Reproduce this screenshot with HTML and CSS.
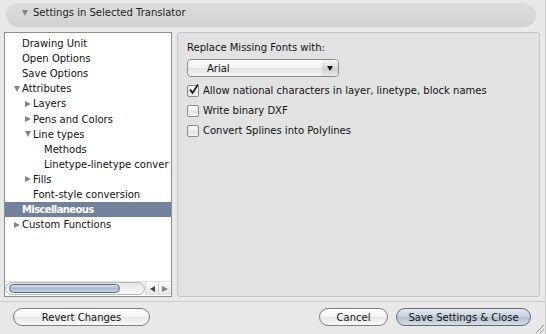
FILE: index.html
```html
<!DOCTYPE html>
<html lang="en">
<head>
    <meta charset="UTF-8">
    <title>Settings in Selected Translator</title>
    <link rel="stylesheet" href="styles.css">
</head>
<body>
    <div class="okno">
        <div class="glava">
            <span class="tri dol"></span>
            <span>Settings in Selected Translator</span>
        </div>

        <div class="vsebina">
            <div class="drevo">
                <div class="seznam">
                    <div class="vrsta n0">Drawing Unit</div>
                    <div class="vrsta n0">Open Options</div>
                    <div class="vrsta n0">Save Options</div>
                    <div class="vrsta n0"><span class="tri dol"></span>Attributes</div>
                    <div class="vrsta n1"><span class="tri desno"></span>Layers</div>
                    <div class="vrsta n1"><span class="tri desno"></span>Pens and Colors</div>
                    <div class="vrsta n1"><span class="tri dol"></span>Line types</div>
                    <div class="vrsta n2">Methods</div>
                    <div class="vrsta n2">Linetype-linetype conver</div>
                    <div class="vrsta n1"><span class="tri desno"></span>Fills</div>
                    <div class="vrsta n1">Font-style conversion</div>
                    <div class="vrsta n0 izbran">Miscellaneous</div>
                    <div class="vrsta n0"><span class="tri desno"></span>Custom Functions</div>
                </div>
                <div class="drsnik">
                    <div class="sled"><div class="rocaj"></div></div>
                    <div class="puscica"><span class="tri levo"></span></div>
                    <div class="puscica"><span class="tri desno"></span></div>
                </div>
            </div>

            <div class="plosca">
                <div class="oznaka">Replace Missing Fonts with:</div>
                <div class="izbira">
                    <span>Arial</span>
                    <span class="izbira-gumb"><span class="tri dol"></span></span>
                </div>
                <label class="polje"><span class="kvadrat oznacen">
                    <svg width="11" height="11" viewBox="0 0 11 11"><path d="M2 5.5 L4.5 9 L10 0.5" fill="none" stroke="#1d1d1d" stroke-width="1.8"/></svg>
                </span>Allow national characters in layer, linetype, block names</label>
                <label class="polje"><span class="kvadrat"></span>Write binary DXF</label>
                <label class="polje"><span class="kvadrat"></span>Convert Splines into Polylines</label>
            </div>
        </div>

        <div class="noga">
            <button class="gumb revert">Revert Changes</button>
            <span class="presledek"></span>
            <button class="gumb cancel">Cancel</button>
            <button class="gumb privzet">Save Settings &amp; Close</button>
        </div>
        <div class="rocka"></div>
    </div>
</body>
</html>
```

FILE: styles.css
```css
* {
    box-sizing: border-box;
}

body {
    margin: 0;
    background-color: #e8e8e8;
    font-family: "DejaVu Sans", "Lucida Grande", sans-serif;
    font-size: 10px;
    color: #111;
}

.okno {
    position: relative;
    width: 546px;
    height: 334px;
    display: flex;
    flex-direction: column;
    border-right: 1px solid #d0d0d0;
}

.glava {
    margin: 3px 9px 0 6px;
    height: 24px;
    border-radius: 12px;
    background: linear-gradient(#dcdcdc, #d2d2d2);
    display: flex;
    align-items: center;
    padding: 0 0 5px 16px;
    gap: 5px;
    color: #222;
}

.tri {
    display: inline-block;
    width: 0;
    height: 0;
}

.tri.dol {
    border-left: 3.5px solid transparent;
    border-right: 3.5px solid transparent;
    border-top: 6px solid #858585;
}

.tri.desno {
    border-top: 3.5px solid transparent;
    border-bottom: 3.5px solid transparent;
    border-left: 6px solid #858585;
}

.tri.levo {
    border-top: 3px solid transparent;
    border-bottom: 3px solid transparent;
    border-right: 5px solid #444;
}

.vsebina {
    display: flex;
    gap: 5px;
    margin: 5px 5px 0 4px;
    height: 265px;
}

.drevo {
    width: 168px;
    background-color: white;
    border: 1px solid #8e8e8e;
    display: flex;
    flex-direction: column;
}

.seznam {
    flex: 1;
    padding-top: 3px;
    overflow: hidden;
}

.vrsta {
    height: 15.1px;
    line-height: 15px;
    white-space: nowrap;
    display: flex;
    align-items: center;
}

.vrsta .tri {
    margin-right: 2px;
}

.n0 {
    padding-left: 17px;
}

.n0 .tri {
    margin-left: -8px;
}

.n1 {
    padding-left: 28px;
}

.n1 .tri {
    margin-left: -8px;
}

.n2 {
    padding-left: 39px;
}

.izbran {
    background-color: #73829c;
    color: white;
    font-weight: bold;
    letter-spacing: -0.6px;
}

.drsnik {
    height: 14px;
    display: flex;
    margin: 0 0 1px 0;
    border-top: 1px solid #e4e4e4;
}

.sled {
    flex: 1;
    border: 1px solid #b8b8b8;
    border-radius: 7px;
    background: linear-gradient(#e4e4e4, #fafafa);
    padding: 1px 24px 1px 3px;
}

.rocaj {
    height: 100%;
    border: 1px solid #536580;
    border-radius: 6px;
    background: linear-gradient(#dbe3ee, #a9b8cc 50%, #c7d3e2);
}

.puscica {
    width: 13px;
    display: flex;
    align-items: center;
    justify-content: center;
    border-left: 1px solid #d4d4d4;
    background: linear-gradient(#fdfdfd, #e4e4e4);
}

.plosca {
    flex: 1;
    background-color: #e2e2e2;
    border: 1px solid #c4c4c4;
    border-radius: 3px;
    padding: 8px 0 0 9px;
}

.oznaka {
    height: 14px;
    line-height: 14px;
    margin-bottom: 4px;
}

.izbira {
    width: 152px;
    height: 18px;
    border: 1px solid #8d8d8d;
    border-radius: 4px;
    background: linear-gradient(#ffffff, #f0f0f0 50%, #e3e3e3 51%, #f4f4f4);
    display: flex;
    align-items: center;
    justify-content: space-between;
    padding-left: 19px;
    margin-bottom: 7px;
}

.izbira-gumb {
    width: 16px;
    height: 100%;
    display: flex;
    align-items: center;
    justify-content: center;
    border-radius: 0 3px 3px 0;
    background: linear-gradient(#f6f6f6, #dadada 50%, #cfcfcf 51%, #e8e8e8);
}

.izbira-gumb .tri.dol {
    border-top-color: #111;
    border-left-width: 3px;
    border-right-width: 3px;
    border-top-width: 5px;
}

.polje {
    display: flex;
    align-items: center;
    gap: 4px;
    height: 13px;
    margin-bottom: 7px;
}

.kvadrat {
    width: 12px;
    height: 12px;
    border: 1px solid #8a8a8a;
    border-radius: 2px;
    background: linear-gradient(#ffffff, #ececec 50%, #e2e2e2 51%, #f4f4f4);
    position: relative;
}

.kvadrat svg {
    position: absolute;
    left: 0;
    top: -2px;
}

.noga {
    margin-top: 4px;
    border-top: 1px solid #c9c9c9;
    display: flex;
    align-items: center;
    padding: 6px 14px 0 13px;
    gap: 8px;
}

.presledek {
    flex: 1;
}

.gumb {
    height: 18px;
    border: 1px solid #7d7d7d;
    border-radius: 9px;
    background: linear-gradient(#ffffff, #f4f4f4 50%, #e6e6e6 51%, #fafafa);
    font-family: inherit;
    font-size: 10px;
    color: #111;
    padding: 0;
}

.revert {
    width: 137px;
}

.cancel {
    width: 69px;
}

.privzet {
    width: 135px;
    border-color: #5d6a7e;
    background: linear-gradient(#e6ebf2, #c5cfdc 50%, #b3bfcf 51%, #d6dee9);
}

.rocka {
    position: absolute;
    right: 1px;
    bottom: 1px;
    width: 10px;
    height: 10px;
    background: repeating-linear-gradient(135deg, transparent 0 2px, #9a9a9a 2px 3px);
    clip-path: polygon(100% 0, 100% 100%, 0 100%);
}
```
